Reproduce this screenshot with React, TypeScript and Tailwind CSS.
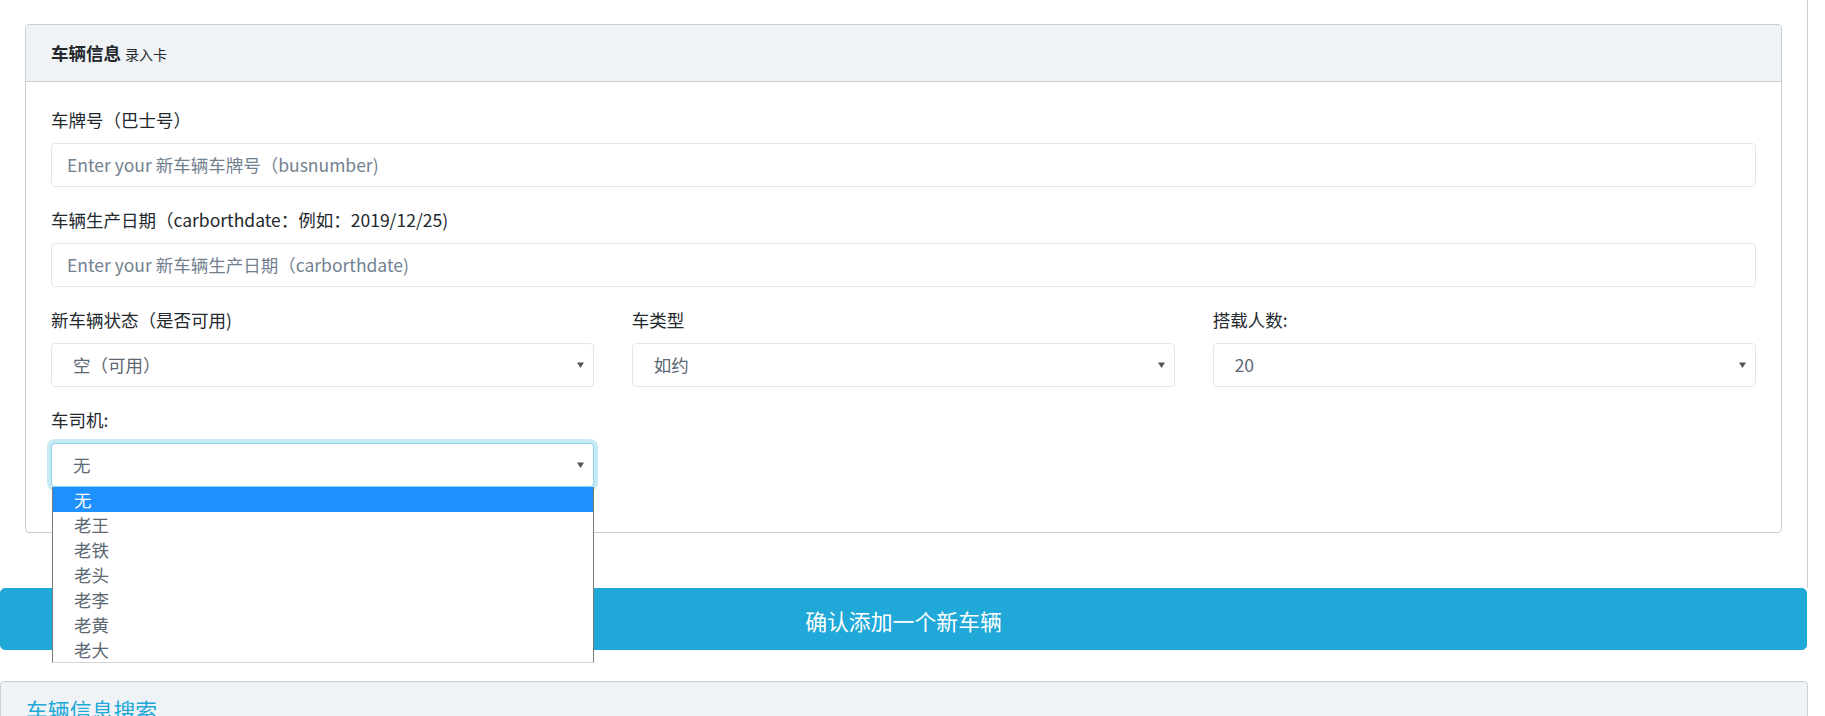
import React from 'react'

const drivers = ['无', '老王', '老铁', '老头', '老李', '老黄', '老大']

function Arrow() {
  return (
    <svg width="7" height="6" viewBox="0 0 7 6" className="ml-auto mr-[9px] shrink-0">
      <path d="M0 0.5h7L3.5 6z" fill="#555" />
    </svg>
  )
}

function SelectBox({ value, focused = false, children }: { value: string; focused?: boolean; children?: React.ReactNode }) {
  return (
    <div className="relative">
      <div
        className={`flex h-[43.75px] items-center rounded border bg-white pl-[21px] text-[#5c6873] ${
          focused ? 'border-[#8ad4ee] shadow-[0_0_0_4px_rgba(32,168,216,0.25)]' : 'border-[#e4e7ea]'
        }`}
      >
        <span>{value}</span>
        <Arrow />
      </div>
      {children}
    </div>
  )
}

function Field({ label, children }: { label: string; children: React.ReactNode }) {
  return (
    <div className="mb-5">
      <label className="mb-[10px] block">{label}</label>
      {children}
    </div>
  )
}

function TextInput({ placeholder }: { placeholder: string }) {
  return (
    <input
      type="text"
      placeholder={placeholder}
      className="block h-[43.75px] w-full rounded border border-[#e4e7ea] bg-white px-[15px] text-[#5c6873] outline-none placeholder:text-[#73818f]"
    />
  )
}

export default function App() {
  return (
    <div className="h-[716px] w-full overflow-hidden bg-white font-['Noto_Sans_CJK_SC','Noto_Sans',sans-serif] text-[17.5px] leading-[26.25px] text-[#23282c]">
      <div className="w-[1808px] border-r border-[#c8ced3] px-[25px] pt-6 pb-[25px]">
        <div className="mb-[30px] rounded border border-[#c8ced3] bg-white">
          <div className="h-[56.5px] rounded-t border-b border-[#c8ced3] bg-[#f0f3f5] px-[25px] py-[15px]">
            <strong className="font-bold">车辆信息</strong>{' '}
            <small className="text-[14px] leading-none">录入卡</small>
          </div>
          <div className="p-[25px]">
            <Field label="车牌号（巴士号）">
              <TextInput placeholder="Enter your 新车辆车牌号（busnumber)" />
            </Field>
            <Field label="车辆生产日期（carborthdate：例如：2019/12/25)">
              <TextInput placeholder="Enter your 新车辆生产日期（carborthdate)" />
            </Field>
            <div className="grid grid-cols-3 gap-x-[37.5px]">
              <Field label="新车辆状态（是否可用)">
                <SelectBox value="空（可用）" />
              </Field>
              <Field label="车类型">
                <SelectBox value="如约" />
              </Field>
              <Field label="搭载人数:">
                <SelectBox value="20" />
              </Field>
              <Field label="车司机:">
                <SelectBox value="无" focused>
                  {/* 展开的下拉列表 */}
                  <ul className="absolute top-full right-0 left-[1px] z-10 border-x border-b border-x-[#7a7a7a] border-b-[#d5d5d5] bg-white leading-[25px]">
                    {drivers.map((d, i) => (
                      <li
                        key={d}
                        className={`h-[25px] pl-[21px] ${i === 0 ? 'bg-[#1e90ff] text-white' : 'text-[#5c6873]'}`}
                      >
                        {d}
                      </li>
                    ))}
                  </ul>
                </SelectBox>
              </Field>
            </div>
          </div>
        </div>
      </div>

      <button className="block h-[62px] w-[1807px] rounded-[5px] border border-[#20a8d8] bg-[#20a8d8] pt-[5px] text-[21.875px] text-white">
        确认添加一个新车辆
      </button>

      <div className="mt-[31px] w-[1808px] rounded-t border border-[#c8ced3] bg-[#f0f3f5] px-[25px] pt-[15px] pb-[15px]">
        <h5 className="text-[21.875px] leading-[26.25px] text-[#20a8d8]">车辆信息搜索</h5>
      </div>
    </div>
  )
}
